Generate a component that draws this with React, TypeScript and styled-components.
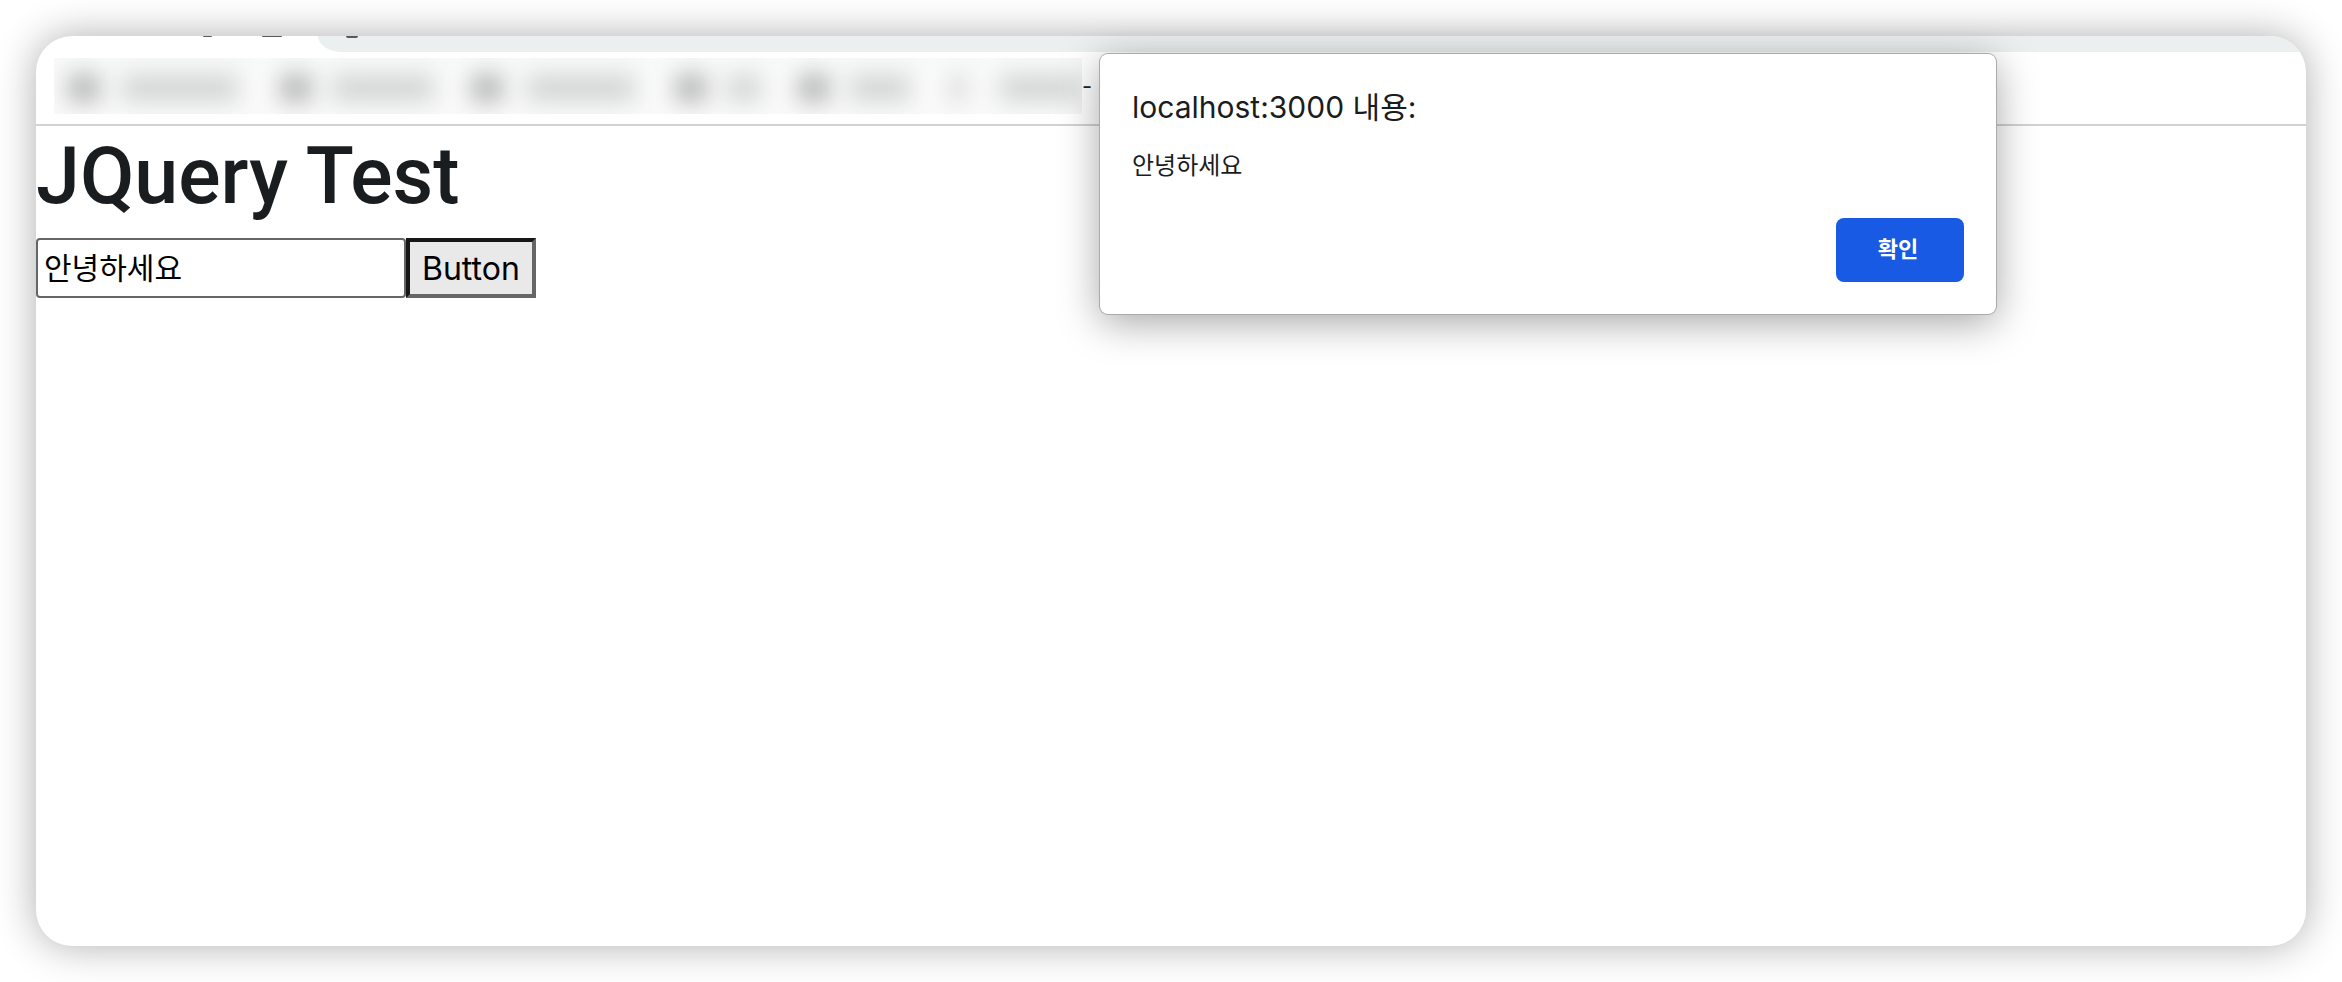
import React, { FormEvent, useState } from "react";
import styled, { createGlobalStyle } from "styled-components";

const sans = `Inter, "Noto Sans CJK KR", sans-serif`;

const GlobalStyle = createGlobalStyle`
  *, *::before, *::after { box-sizing: border-box; }
  body { margin: 0; background: #fff; font-family: ${sans}; color: #212529; }
`;

const Backdrop = styled.div`
  display: flex;
  min-height: 100vh;
  padding: 36px;
`;

const BrowserWindow = styled.div`
  position: relative;
  flex: 1;
  min-width: 0;
  background: #fff;
  border-radius: 36px;
  box-shadow: 0 0 40px rgba(0, 0, 0, 0.32);
`;

const Chrome = styled.header`
  border-bottom: 2px solid #d2d2d2;
  border-radius: 36px 36px 0 0;
  overflow: hidden;
`;

const TabStrip = styled.div`
  display: flex;
  height: 16px;
`;

const ActiveTab = styled.div`
  display: flex;
  justify-content: flex-end;
  gap: 50px;
  width: 282px;
  padding-right: 36px;
`;

const TabStripRest = styled.div`
  flex: 1;
  padding-left: 28px;
  background: #ebefef;
  border-bottom-left-radius: 24px 16px;
`;

const GlyphEdge = styled.div<{ $width: number; $height: number }>`
  width: ${(p) => p.$width}px;
  height: ${(p) => p.$height}px;
  background: #55595d;
  border-radius: 0 0 4px 4px;
`;

const BookmarkBar = styled.nav`
  display: flex;
  align-items: center;
  padding: 6px 18px 10px;
`;

const Redacted = styled.div`
  display: flex;
  align-items: center;
  height: 56px;
  width: 1028px;
  padding-top: 4px;
  overflow: hidden;
  background: linear-gradient(#f8f9f9, #fcfcfc 50%, #fafafa);
`;

const Smudge = styled.span<{ $width: number; $gap: number; $tone?: string }>`
  flex: none;
  width: ${(p) => p.$width}px;
  height: 26px;
  margin-left: ${(p) => p.$gap}px;
  border-radius: 8px;
  background: ${(p) => p.$tone ?? "#cfd1d1"};
  filter: blur(12px);
`;

const BookmarkText = styled.span`
  padding-top: 2px;
  font-size: 22px;
  line-height: 32px;
  color: #212529;
`;

const Heading = styled.h1`
  margin: 0 0 16px;
  padding-top: 4px;
  font-family: Roboto, sans-serif;
  font-size: 79px;
  font-weight: 500;
  line-height: 92px;
  color: #1a1d20;
`;

const Form = styled.form`
  display: flex;
`;

const TextInput = styled.input`
  width: 370px;
  height: 60px;
  padding: 0 6px 4px;
  border: 2px solid #666;
  border-radius: 4px;
  background: #fff;
  color: #000;
  font-family: ${sans};
  font-size: 30px;
  outline: none;
`;

const SubmitButton = styled.button`
  height: 60px;
  padding: 0 12px;
  border: 4px solid;
  border-color: #161616 #666 #666 #161616;
  border-radius: 0;
  background: #e9e9e9;
  color: #000;
  font-family: ${sans};
  font-size: 32px;
`;

const Dialog = styled.section`
  position: absolute;
  top: 18px;
  left: 1064px;
  width: 896px;
  padding: 32px;
  background: #fff;
  border-radius: 8px;
  box-shadow: 0 0 0 1px #aaa, 0 8px 40px rgba(0, 0, 0, 0.36);
  color: #1b1c1e;
`;

const DialogTitle = styled.h2`
  margin: 0;
  font-size: 30px;
  font-weight: 400;
  line-height: 42px;
`;

const DialogMessage = styled.p`
  margin: 18px 0 32px;
  font-size: 24px;
  line-height: 40px;
`;

const DialogActions = styled.div`
  display: flex;
  justify-content: flex-end;
`;

const ConfirmButton = styled.button`
  width: 128px;
  height: 64px;
  padding: 0 4px 6px 0;
  border: 0;
  border-radius: 8px;
  background: #185ae3;
  color: #fff;
  font-family: ${sans};
  font-size: 22px;
  font-weight: 600;
`;

const iconTone = "#a8a9a9";

const smudges = [
  { width: 32, gap: 14, tone: iconTone },
  { width: 120, gap: 20 },
  { width: 32, gap: 40, tone: iconTone },
  { width: 106, gap: 18 },
  { width: 32, gap: 35, tone: iconTone },
  { width: 112, gap: 22 },
  { width: 32, gap: 38, tone: iconTone },
  { width: 38, gap: 18 },
  { width: 32, gap: 35, tone: iconTone },
  { width: 64, gap: 18 },
  { width: 20, gap: 36, tone: "#d4d4d4" },
  { width: 84, gap: 30 },
];

export default function App() {
  const [value, setValue] = useState("안녕하세요");
  const [message, setMessage] = useState<string | null>("안녕하세요");

  const submit = (event: FormEvent) => {
    event.preventDefault();
    setMessage(value);
  };

  return (
    <>
      <GlobalStyle />
      <Backdrop>
        <BrowserWindow>
          <Chrome>
            <TabStrip aria-hidden="true">
              <ActiveTab>
                <GlyphEdge $width={9} $height={1} />
                <GlyphEdge $width={20} $height={1} />
              </ActiveTab>
              <TabStripRest>
                <GlyphEdge $width={12} $height={2} />
              </TabStripRest>
            </TabStrip>
            <BookmarkBar>
              <Redacted aria-hidden="true">
                {smudges.map((s, i) => (
                  <Smudge key={i} $width={s.width} $gap={s.gap} $tone={s.tone} />
                ))}
              </Redacted>
              <BookmarkText>- T</BookmarkText>
            </BookmarkBar>
          </Chrome>
          <main>
            <Heading>JQuery Test</Heading>
            <Form onSubmit={submit}>
              <TextInput
                aria-label="내용"
                value={value}
                onChange={(e) => setValue(e.target.value)}
              />
              <SubmitButton type="submit">Button</SubmitButton>
            </Form>
          </main>
          {message !== null && (
            <Dialog role="alertdialog" aria-labelledby="dialog-title">
              <DialogTitle id="dialog-title">localhost:3000 내용:</DialogTitle>
              <DialogMessage>{message}</DialogMessage>
              <DialogActions>
                <ConfirmButton type="button" onClick={() => setMessage(null)}>
                  확인
                </ConfirmButton>
              </DialogActions>
            </Dialog>
          )}
        </BrowserWindow>
      </Backdrop>
    </>
  );
}
